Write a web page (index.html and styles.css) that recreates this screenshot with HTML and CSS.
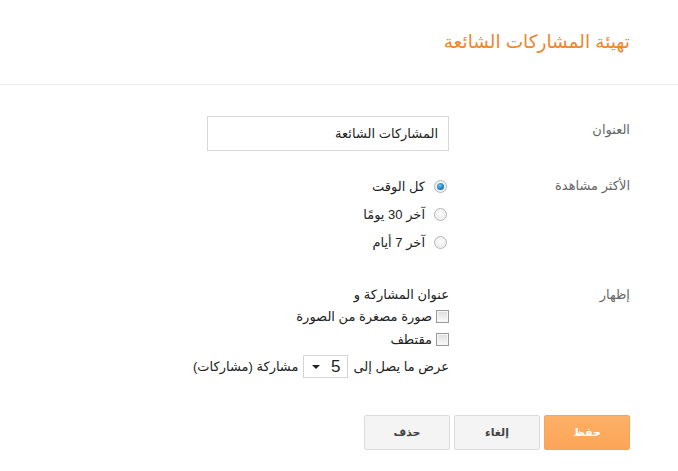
FILE: index.html
```html
<!DOCTYPE html>
<html lang="ar" dir="rtl">
<head>
<meta charset="utf-8">
<title>تهيئة المشاركات الشائعة</title>
<link rel="stylesheet" href="styles.css">
</head>
<body>
<div class="header">
  <h1 class="title">تهيئة المشاركات الشائعة</h1>
</div>
<div class="form">
  <div class="row row-title">
    <div class="label">العنوان</div>
    <div class="value">
      <div class="textbox">المشاركات الشائعة</div>
    </div>
  </div>
  <div class="row row-views">
    <div class="label">الأكثر مشاهدة</div>
    <div class="value">
      <div class="opt"><span class="radio checked"></span><span>كل الوقت</span></div>
      <div class="opt"><span class="radio"></span><span>آخر 30 يومًا</span></div>
      <div class="opt"><span class="radio"></span><span>آخر 7 أيام</span></div>
    </div>
  </div>
  <div class="row row-show">
    <div class="label">إظهار</div>
    <div class="value">
      <div class="line">عنوان المشاركة و</div>
      <div class="cbline"><span class="check"></span><span>صورة مصغرة من الصورة</span></div>
      <div class="cbline"><span class="check"></span><span>مقتطف</span></div>
      <div class="selline"><span>عرض ما يصل إلى</span><span class="select"><span class="selval">5</span><span class="arrow"></span></span><span>مشاركة (مشاركات)</span></div>
    </div>
  </div>
  <div class="buttons">
    <button class="btn primary">حفظ</button>
    <button class="btn">إلغاء</button>
    <button class="btn">حذف</button>
  </div>
</div>
</body>
</html>
```
FILE: styles.css
```css
html, body {
  margin: 0;
  padding: 0;
  background: #fff;
}
body {
  font-family: Arial, "Liberation Sans", "DejaVu Sans", sans-serif;
  font-size: 13px;
  color: #222;
}
.header {
  height: 85px;
  border-bottom: 1px solid #ebebeb;
  padding-right: 48px;
  box-sizing: border-box;
}
.title {
  margin: 0;
  padding-top: 29px;
  font-size: 18.5px;
  line-height: 26px;
  font-weight: normal;
  color: #f0862a;
}
.form {
  padding: 0 48px 0 48px;
}
.row {
  display: grid;
  grid-template-columns: 181px 1fr;
}
.label {
  color: #666;
  font-size: 13px;
}
.row-title {
  margin-top: 31px;
}
.row-title .label {
  padding-top: 6px;
}
.value {
  display: flex;
  flex-direction: column;
  align-items: flex-start;
}
.textbox {
  width: 242px;
  height: 35px;
  box-sizing: border-box;
  border: 1px solid #d9d9d9;
  padding: 0 10px;
  line-height: 33px;
  font-size: 13px;
  color: #222;
}
.row-views {
  margin-top: 21px;
}
.row-views .label {
  line-height: 28px;
}
.opt {
  height: 28px;
  display: flex;
  align-items: center;
  gap: 9px;
  padding-right: 2px;
}
.radio {
  width: 13px;
  height: 13px;
  box-sizing: border-box;
  border-radius: 50%;
  border: 1px solid #b5b5b5;
  background: radial-gradient(circle at 50% 40%, #ffffff 0%, #e9e9e9 70%, #d6d6d6 100%);
  box-shadow: inset 0 0 0 1px #f4f4f4;
  position: relative;
}
.radio.checked::after {
  content: "";
  position: absolute;
  left: 2px;
  top: 2px;
  width: 7px;
  height: 7px;
  border-radius: 50%;
  background: radial-gradient(circle at 40% 35%, #6fc1ee 0%, #1f7fc0 60%, #0f5f9a 100%);
}
.row-show {
  margin-top: 29px;
}
.row-show .label {
  line-height: 20px;
}
.line {
  line-height: 20px;
}
.cbline {
  height: 23px;
  display: flex;
  align-items: center;
  gap: 4px;
}
.check {
  width: 13px;
  height: 13px;
  box-sizing: border-box;
  border: 1px solid #999;
  background: linear-gradient(#dedede, #fafafa);
  box-shadow: inset 0 0 0 1px #f6f6f6;
}
.selline {
  margin-top: 4px;
  display: flex;
  align-items: center;
  gap: 5px;
}
.select {
  width: 45px;
  height: 23px;
  box-sizing: border-box;
  border: 1px solid #d4d4d4;
  display: flex;
  align-items: center;
  justify-content: space-between;
  padding: 0 7px 0 8px;
}
.selval {
  font-size: 17px;
  color: #222;
}
.arrow {
  width: 0;
  height: 0;
  border-left: 4px solid transparent;
  border-right: 4px solid transparent;
  border-top: 4px solid #222;
}
.buttons {
  margin-top: 37px;
  display: flex;
  gap: 4px;
}
.btn {
  width: 86px;
  height: 35px;
  box-sizing: border-box;
  border: 1px solid #dcdcdc;
  border-radius: 2px;
  background: #f4f4f4;
  color: #444;
  font-family: Arial, "Liberation Sans", "DejaVu Sans", sans-serif;
  font-size: 11px;
  font-weight: bold;
  padding: 0;
}
.btn.primary {
  background: linear-gradient(#fdb067, #fca557);
  border-color: #f9a35a;
  color: #fff;
}
```
